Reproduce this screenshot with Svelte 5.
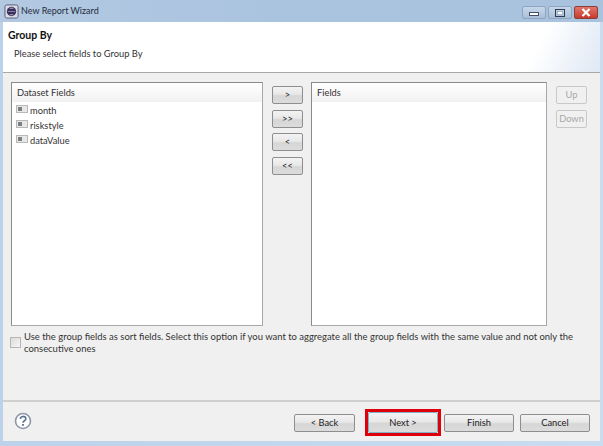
<script>
  const moves = [">", ">>", "<", "<<"];
  const datasetFields = ["month", "riskstyle", "dataValue"];
</script>

<div class="window">
  <div class="titlebar">
    <svg class="appicon" width="15" height="15" viewBox="0 0 16 16">
      <rect x="1" y="1" width="14" height="14" rx="2" fill="#d9dde6" stroke="#59597a" />
      <circle cx="8" cy="8" r="5" fill="#3a2f5c" />
      <path d="M4 8h8" stroke="#8d86a8" stroke-width="1" />
      <path d="M6 4.5h4M6 11.5h4" stroke="#b9b4cc" stroke-width="1" />
    </svg>
    <span class="title">New Report Wizard</span>
    <div class="controls">
      <div class="ctl">
        <svg width="10" height="6" viewBox="0 0 10 6"><rect x="0.5" y="2.5" width="9" height="3" fill="#fff" stroke="#44506a" /></svg>
      </div>
      <div class="ctl">
        <svg width="10" height="8" viewBox="0 0 10 8"><rect x="0.5" y="0.5" width="9" height="7" fill="none" stroke="#2f3b55" /><rect x="2.5" y="2.5" width="5" height="3" fill="#fff" stroke="#8a94a8" stroke-width="0.6" /></svg>
      </div>
      <div class="close">
        <svg width="10" height="9" viewBox="0 0 10 9"><path d="M1.5 1l7 7M8.5 1l-7 7" stroke="#fff" stroke-width="2.2" /></svg>
      </div>
    </div>
  </div>

  <div class="body">
    <header class="head">
      <h1>Group By</h1>
      <p>Please select fields to Group By</p>
    </header>

    <div class="content">
      <div class="columns">
        <section class="panel left">
          <div class="colhead">Dataset Fields</div>
          <ul>
            {#each datasetFields as field}
              <li>
                <svg width="12" height="8" viewBox="0 0 12 8">
                  <rect x="0.5" y="0.5" width="11" height="7" fill="#e8e8e8" stroke="#b8b8b8" />
                  <rect x="2" y="2" width="4" height="4" fill="#7a7f80" />
                </svg>
                {field}
              </li>
            {/each}
          </ul>
        </section>

        <div class="moves">
          {#each moves as m}
            <button class="btn">{m}</button>
          {/each}
        </div>

        <section class="panel right">
          <div class="colhead">Fields</div>
        </section>

        <div class="updown">
          <button class="btn off">Up</button>
          <button class="btn off">Down</button>
        </div>
      </div>

      <label class="sort">
        <span class="box"></span>
        <span class="sorttext">Use the group fields as sort fields. Select this option if you want to aggregate all the group fields with the same value and not only the consecutive ones</span>
      </label>
    </div>

    <footer class="foot">
      <svg class="help" width="20" height="20" viewBox="0 0 20 20">
        <circle cx="10" cy="10" r="7.5" fill="#fff" stroke="#8c96a8" stroke-width="1.6" />
        <path d="M7.3 8c0-3.4 5.6-3.4 5.6-.2 0 2-2.9 1.9-2.9 4" fill="none" stroke="#5d7391" stroke-width="1.6" />
        <rect x="9.1" y="13" width="1.8" height="1.8" fill="#5d7391" />
      </svg>
      <div class="actions">
        <button class="btn action">&lt; Back</button>
        <span class="marked"><button class="btn action next">Next &gt;</button></span>
        <button class="btn action">Finish</button>
        <button class="btn action">Cancel</button>
      </div>
    </footer>
  </div>
</div>

<style>
  :global(body) {
    margin: 0;
    background: #c4d7ec;
  }
  .window {
    width: 603px;
    height: 446px;
    box-sizing: border-box;
    padding: 0 3px 5px 3px;
    display: flex;
    flex-direction: column;
    font: 9.3px/12px Lato, "Liberation Sans", sans-serif;
    color: #222;
    background: linear-gradient(90deg, #bcd2ea 0, #c9dcf0 100%);
    overflow: hidden;
  }
  .titlebar {
    height: 22px;
    flex: none;
    margin: 0 -3px;
    padding: 0 5px 0 4px;
    display: flex;
    align-items: center;
    gap: 2px;
    background: linear-gradient(90deg, #b3c9e2 0, #aac3df 45%, #a9c2de 100%);
  }
  .title {
    font-size: 9px;
    color: #1f2c3c;
  }
  .controls {
    margin-left: auto;
    display: flex;
    align-self: flex-start;
    gap: 2px;
    margin-top: 6px;
  }
  .ctl,
  .close {
    height: 13px;
    display: flex;
    align-items: center;
    justify-content: center;
    border: 1px solid #8ea4bf;
    border-radius: 2px;
    box-sizing: border-box;
  }
  .ctl {
    width: 24px;
    background: linear-gradient(#c6d7ea, #a9bfd8);
  }
  .close {
    width: 24px;
    border-color: #8a3f3a;
    background: linear-gradient(#e0766b, #c8392c);
  }
  .body {
    flex: 1;
    min-height: 0;
    display: flex;
    flex-direction: column;
    background: #f0f0f0;
  }
  .head {
    height: 51px;
    flex: none;
    box-sizing: border-box;
    padding: 6px 5px 0;
    background: linear-gradient(115deg, #fff 0, #fff 88%, #dfe8f4 100%);
    border-bottom: 1px solid #a8a8a8;
  }
  h1 {
    margin: 0;
    font-size: 10.5px;
    line-height: 14px;
    font-weight: 700;
    color: #111;
  }
  p {
    margin: 6px 0 0 6px;
    color: #333;
  }
  .content {
    flex: 1;
    padding: 9px 7px 0 8px;
    min-height: 0;
  }
  .columns {
    display: flex;
    height: 244px;
  }
  .panel {
    box-sizing: border-box;
    background: #fff;
    border: 1px solid #8f8f8f;
    border-color: #8a8a8a #a8a8a8 #a8a8a8 #8a8a8a;
  }
  .left {
    width: 252px;
  }
  .right {
    width: 236px;
  }
  .colhead {
    height: 19px;
    box-sizing: border-box;
    padding: 4px 5px 0;
    background: linear-gradient(#fff, #f1f1f1);
    color: #333;
  }
  ul {
    list-style: none;
    margin: 0;
    padding: 1px 0 0 4px;
  }
  li {
    height: 15px;
    display: flex;
    align-items: center;
    gap: 2px;
    color: #333;
  }
  li svg {
    margin-top: -3px;
  }
  .moves {
    width: 31px;
    margin: 4px 8px 0 9px;
    display: flex;
    flex-direction: column;
    gap: 5.5px;
  }
  .updown {
    width: 31px;
    margin: 4px 0 0 9px;
    display: flex;
    flex-direction: column;
    gap: 6px;
  }
  .btn {
    display: block;
    width: 31px;
    height: 18px;
    padding: 0;
    box-sizing: border-box;
    border: 1px solid #8e8e8e;
    border-radius: 2px;
    background: linear-gradient(#f3f3f3 0, #e8e8e8 45%, #d6d6d6 55%, #dcdcdc 100%);
    font: inherit;
    color: #222;
  }
  .off {
    border-color: #c8c8c8;
    background: #f0f0f0;
    color: #a8a8a8;
  }
  .sort {
    margin: 5px 0 0 -1px;
    display: flex;
    gap: 3px;
    font-size: 9.45px;
    line-height: 12px;
    color: #333;
  }
  .box {
    width: 9px;
    height: 9px;
    flex: none;
    margin-top: 6px;
    border: 1px solid #b5b5b5;
    background: linear-gradient(135deg, #dcdcdc, #f6f6f6);
  }
  .sorttext {
    width: 555px;
  }
  .foot {
    height: 41px;
    flex: none;
    box-sizing: border-box;
    border-top: 2px solid #cfcfcf;
    padding: 0 10px 0 10px;
    display: flex;
    align-items: center;
    justify-content: space-between;
  }
  .help {
    margin-top: -2px;
  }
  .actions {
    display: flex;
    align-items: center;
    margin-top: 2px;
  }
  .action {
    width: 70px;
  }
  .actions > .action:first-child {
    width: 61px;
  }
  .marked {
    box-sizing: border-box;
    width: 76px;
    height: 27px;
    margin: 0 3px 0 10px;
    border: 3px solid #e0000c;
    background: #f0f0f0;
  }
  .next {
    width: 70px;
    height: 21px;
    border-color: #7fb4c8;
  }
  .marked + .action {
    margin-right: 6px;
  }
</style>
